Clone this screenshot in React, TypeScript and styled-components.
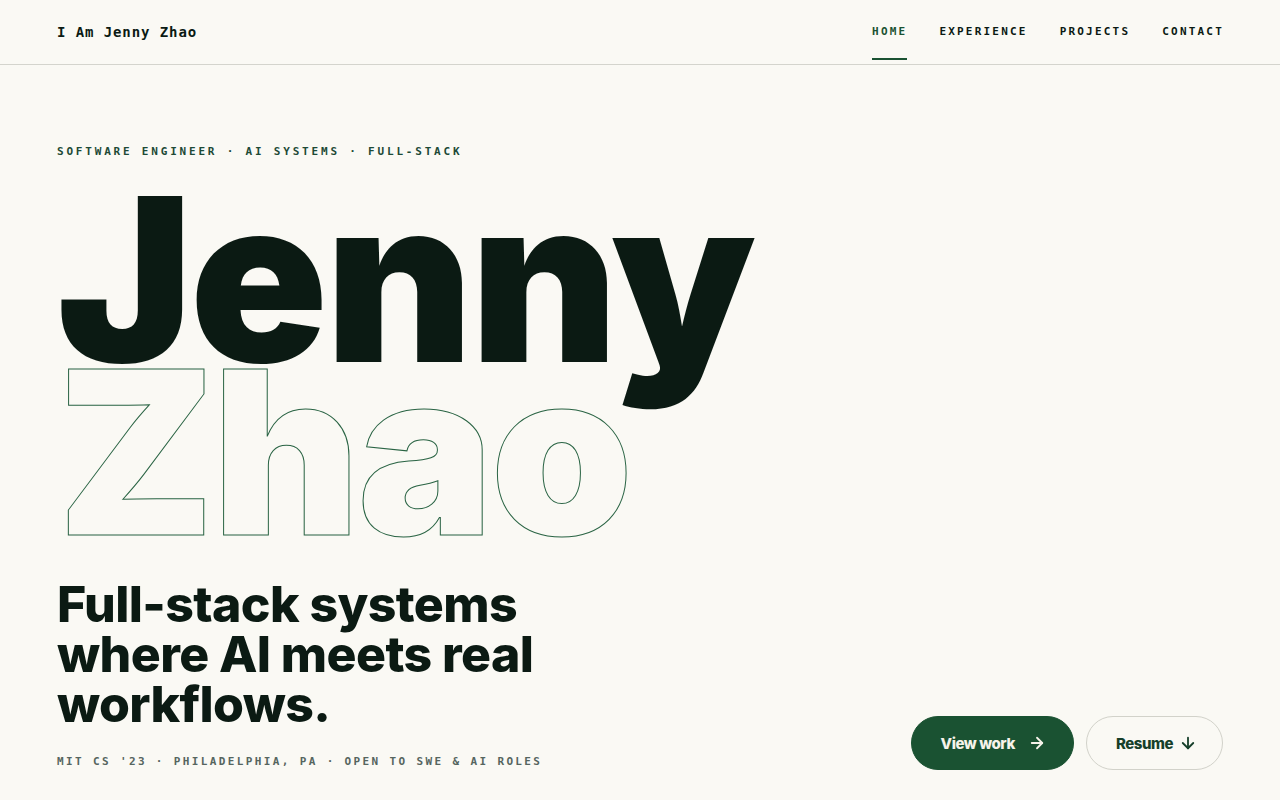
import React from 'react'
import styled, { createGlobalStyle } from 'styled-components'
import { ArrowRight, ArrowDown } from 'lucide-react'

const GlobalStyle = createGlobalStyle`
    * { box-sizing: border-box; }
    html, body { margin: 0; padding: 0; background: #faf9f4; }
    body { font-family: 'Inter', 'Liberation Sans', sans-serif; color: #0b1a13; }
`

const navItems = ['Home', 'Experience', 'Projects', 'Contact']

export default function App() {
    const [active, setActive] = React.useState('Home')
    return (
        <>
            <GlobalStyle />
            <Header>
                <Logo>I Am Jenny Zhao</Logo>
                <Nav>
                    {navItems.map((item) => (
                        <NavLink key={item} href='#' $active={active === item} onClick={(e) => {
                            e.preventDefault()
                            setActive(item)
                        }}>
                            {item}
                        </NavLink>
                    ))}
                </Nav>
            </Header>
            <Hero>
                <Eyebrow>Software Engineer · AI Systems · Full-Stack</Eyebrow>
                <Name>
                    <NameLine>Jenny</NameLine>
                    <NameLine $outline>Zhao</NameLine>
                </Name>
                <Bottom>
                    <div>
                        <Tagline>Full-stack systems where AI meets real workflows.</Tagline>
                        <Meta>MIT CS '23 · Philadelphia, PA · Open to SWE &amp; AI roles</Meta>
                    </div>
                    <Actions>
                        <Button href='#' $primary $gap={13} $padRight={27}>
                            View work <ArrowRight size={18} strokeWidth={2.4} />
                        </Button>
                        <Button href='#' $gap={6} $padRight={25}>
                            Resume <ArrowDown size={18} strokeWidth={2.4} />
                        </Button>
                    </Actions>
                </Bottom>
            </Hero>
        </>
    )
}

const Header = styled.header`
    height: 65px;
    display: flex;
    align-items: center;
    justify-content: space-between;
    padding: 0 56px 0 57px;
    border-bottom: 1px solid #d4d4cd;
`

const Logo = styled.div`
    font-family: 'DejaVu Sans Mono', 'Liberation Mono', monospace;
    font-weight: 700;
    font-size: 14px;
    letter-spacing: 0.065em;
    color: #0b1a13;
`

const Nav = styled.nav`
    display: flex;
    height: 100%;
    gap: 32px;
`

const NavLink = styled.a<{ $active?: boolean }>`
    position: relative;
    display: flex;
    align-items: center;
    height: 100%;
    padding-bottom: 2px;
    font-family: 'DejaVu Sans Mono', 'Liberation Mono', monospace;
    font-weight: 700;
    font-size: 11px;
    letter-spacing: 0.2em;
    text-transform: uppercase;
    text-decoration: none;
    color: ${(p) => (p.$active ? '#1a5232' : '#0b1a13')};
    &::after {
        content: '';
        position: absolute;
        left: 0;
        right: 0;
        bottom: 4px;
        height: 2px;
        background: #1a5232;
        display: ${(p) => (p.$active ? 'block' : 'none')};
    }
`

const Hero = styled.main`
    padding: 81px 57px 30px 57px;
`

const Eyebrow = styled.div`
    font-family: 'DejaVu Sans Mono', 'Liberation Mono', monospace;
    font-weight: 700;
    font-size: 11px;
    line-height: 12px;
    letter-spacing: 0.255em;
    text-transform: uppercase;
    color: #1d4a36;
`

const Name = styled.h1`
    margin: 35px 0 0;
    font-family: 'Inter', 'Liberation Sans', sans-serif;
    font-weight: 900;
    font-size: 228px;
    line-height: 173px;
    letter-spacing: -0.013em;
`

const NameLine = styled.span<{ $outline?: boolean }>`
    display: block;
    color: ${(p) => (p.$outline ? 'transparent' : '#0b1a13')};
    -webkit-text-stroke: ${(p) => (p.$outline ? '1px #2a6444' : '0')};
`

const Bottom = styled.div`
    margin-top: 40px;
    display: flex;
    justify-content: space-between;
    align-items: flex-end;
`

const Tagline = styled.p`
    margin: 0;
    max-width: 560px;
    font-weight: 800;
    font-size: 50px;
    line-height: 50px;
    letter-spacing: -0.012em;
    color: #0b1a13;
`

const Meta = styled.div`
    margin-top: 25px;
    font-family: 'DejaVu Sans Mono', 'Liberation Mono', monospace;
    font-weight: 700;
    font-size: 11px;
    line-height: 16px;
    letter-spacing: 0.215em;
    text-transform: uppercase;
    color: #56655f;
`

const Actions = styled.div`
    display: flex;
    gap: 12px;
`

const Button = styled.a<{ $primary?: boolean; $gap: number; $padRight: number }>`
    display: inline-flex;
    align-items: center;
    gap: ${(p) => p.$gap}px;
    height: 54px;
    padding: 0 ${(p) => p.$padRight}px 0 29px;
    border-radius: 999px;
    font-weight: 800;
    font-size: 15px;
    letter-spacing: -0.03em;
    text-decoration: none;
    background: ${(p) => (p.$primary ? '#1a5232' : 'transparent')};
    color: ${(p) => (p.$primary ? '#f6f3ea' : '#163f2a')};
    border: 1px solid ${(p) => (p.$primary ? '#1a5232' : '#d2d2ca')};
`
